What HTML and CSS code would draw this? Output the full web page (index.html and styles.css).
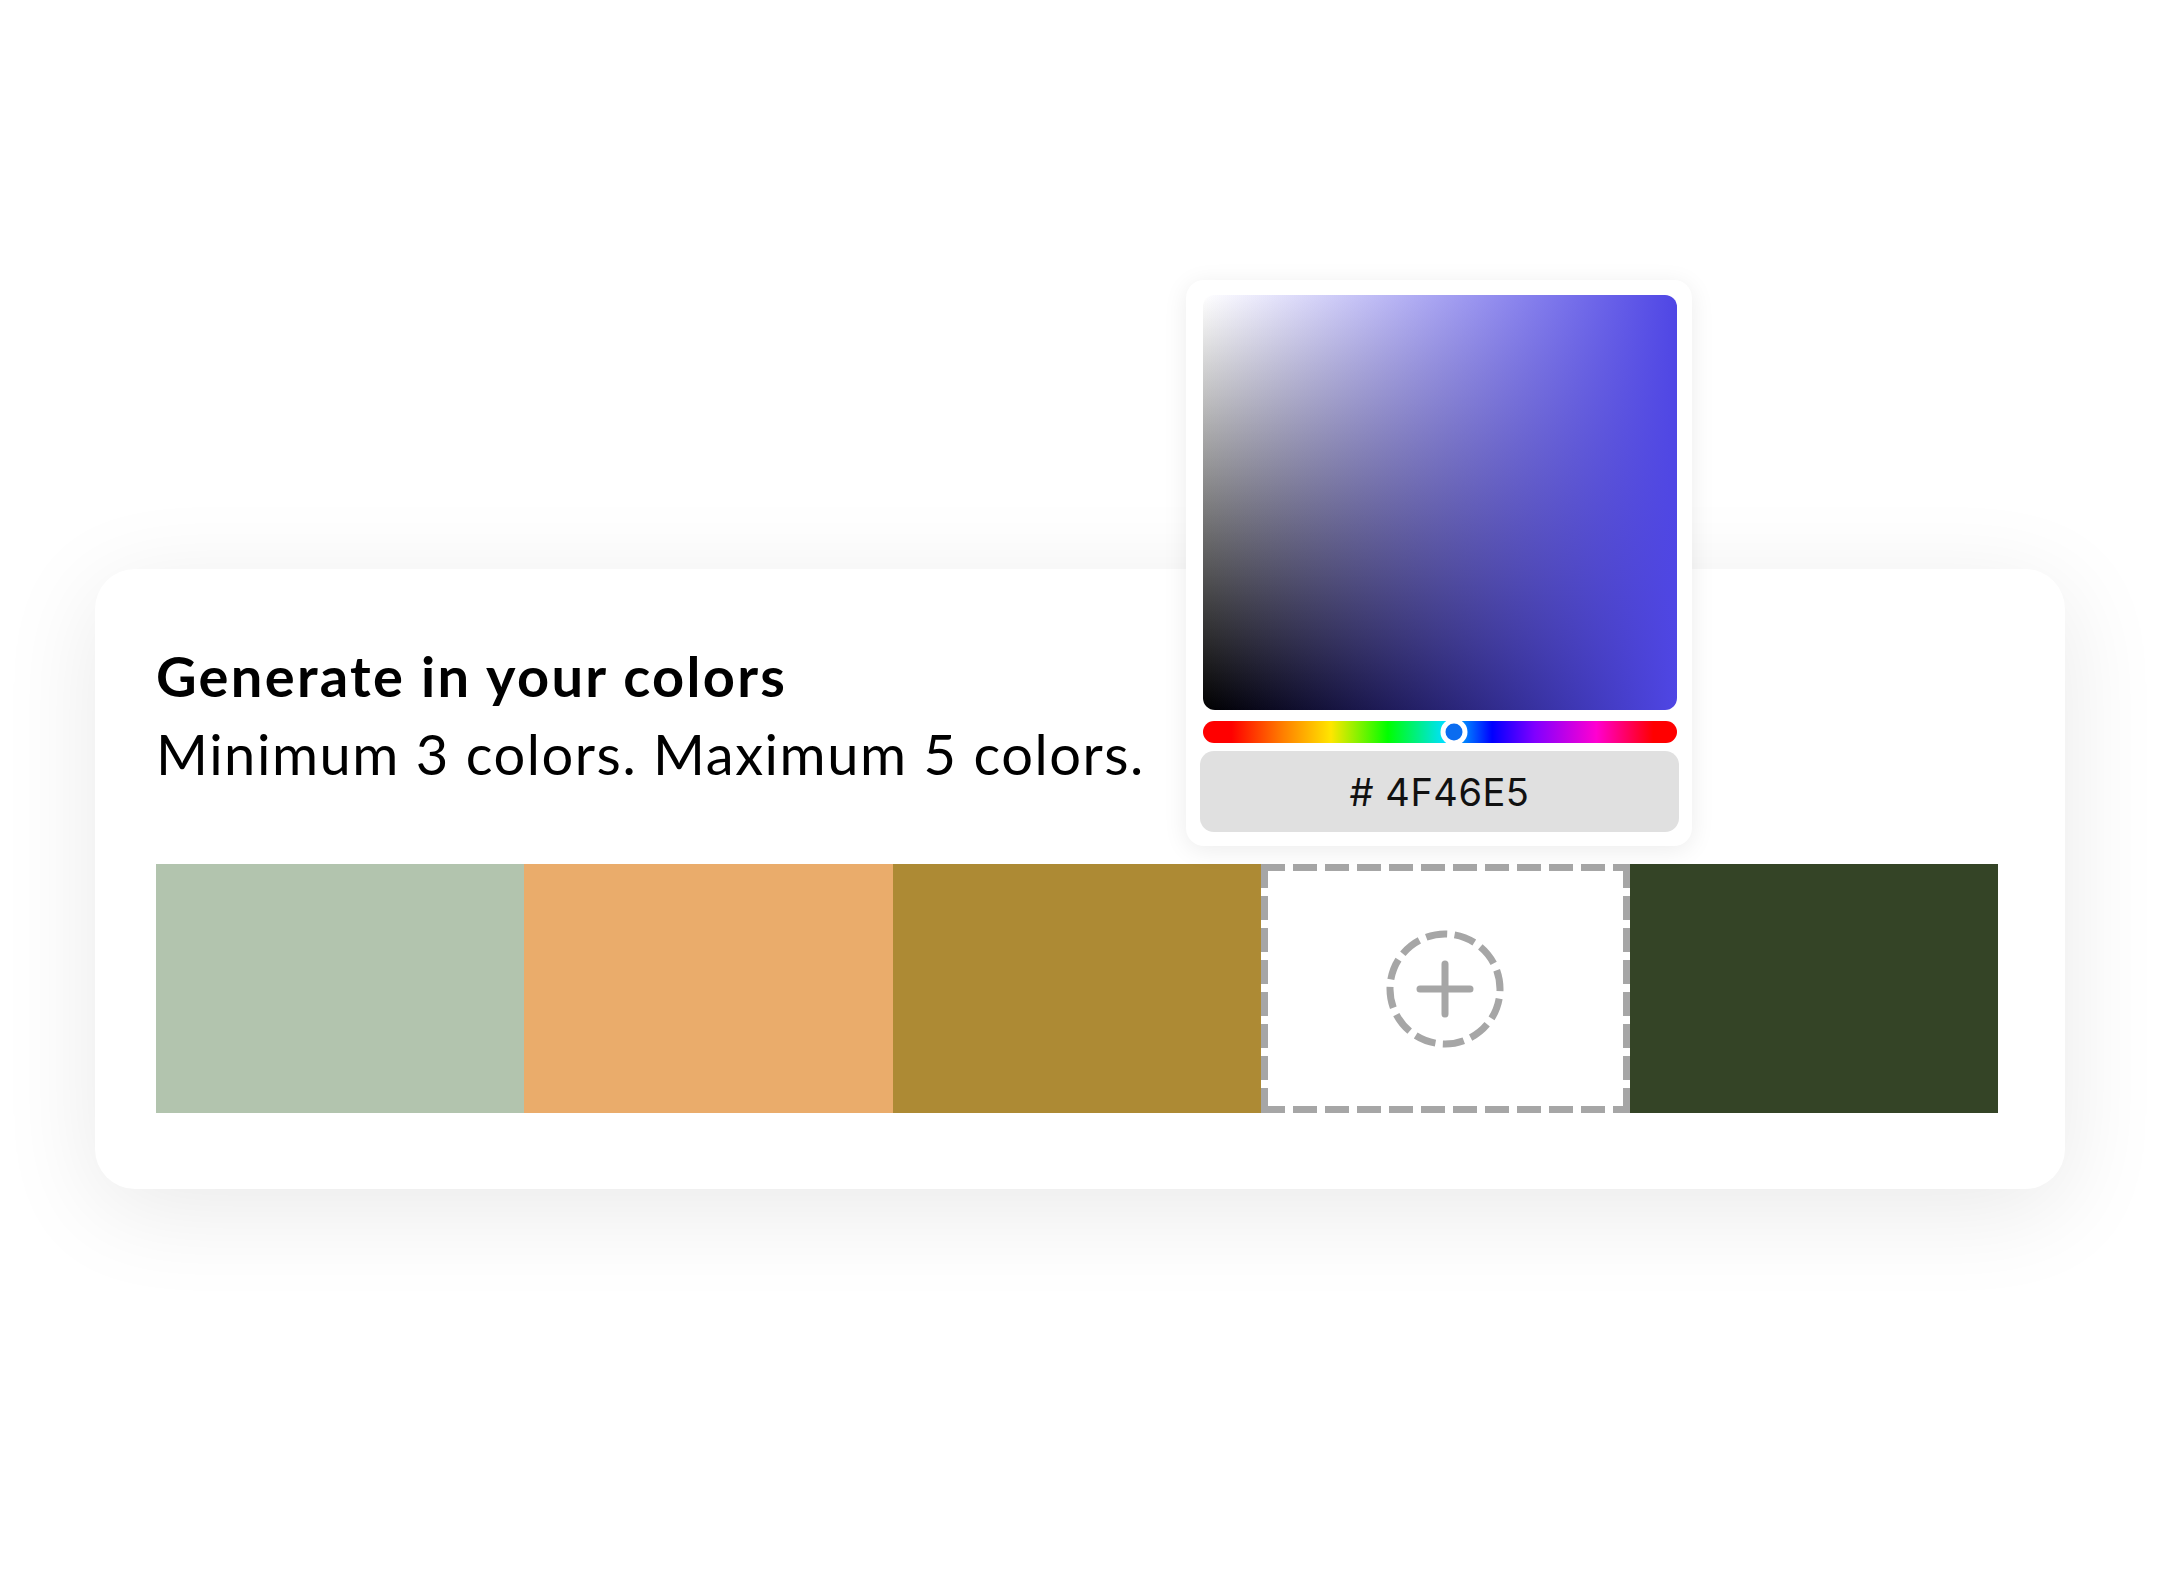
FILE: index.html
```html
<!DOCTYPE html>
<html lang="en">
<head>
    <meta charset="UTF-8">
    <meta name="viewport" content="width=device-width, initial-scale=1.0">
    <title>Generate in your colors</title>
    <link rel="stylesheet" href="styles.css">
</head>
<body>
    <div class="stage">
        <section class="card">
            <div class="intro">
                <h2 class="title">Generate in your colors</h2>
                <p class="subtitle">Minimum 3 colors. Maximum 5 colors.</p>
            </div>

            <div class="palette">
                <div class="swatch swatch-sage"></div>
                <div class="swatch swatch-peach"></div>
                <div class="swatch swatch-mustard"></div>
                <button class="swatch swatch-add" type="button" aria-label="Add color">
                    <svg width="122" height="122" viewBox="0 0 122 122" fill="none" stroke="#a6a6a6" stroke-width="7" stroke-linecap="round">
                        <circle cx="61" cy="61" r="55" pathLength="12" stroke-dasharray="0.74 0.26" stroke-linecap="butt" transform="rotate(-80 61 61)"/>
                        <path d="M61 36v50M36 61h50"/>
                    </svg>
                </button>
                <div class="swatch swatch-moss"></div>
            </div>

            <!-- color picker popover -->
            <div class="picker">
                <div class="picker-field"></div>
                <div class="picker-hue">
                    <span class="picker-thumb"></span>
                </div>
                <div class="picker-hex"># 4F46E5</div>
            </div>
        </section>
    </div>
</body>
</html>
```

FILE: styles.css
```css
body {
    margin: 0;
    background: #ffffff;
    font-family: "Lato", "Liberation Sans", sans-serif;
    color: #000000;
}

.stage {
    padding: 569px 95px 300px 95px;
}

.card {
    position: relative;
    background: #ffffff;
    border-radius: 40px;
    padding: 68px 67px 76px 61px;
    box-shadow: 0 20px 100px rgba(0, 0, 0, 0.09);
}

.intro {
    margin-bottom: 71px;
}

.title {
    margin: 0;
    font-size: 56px;
    line-height: 78px;
    font-weight: 700;
    letter-spacing: 2.3px;
}

.subtitle {
    margin: 0;
    font-size: 56px;
    line-height: 78px;
    font-weight: 400;
    letter-spacing: 1.55px;
}

.palette {
    display: grid;
    grid-template-columns: repeat(5, 1fr);
    height: 249px;
}

.swatch {
    height: 100%;
}

.swatch-sage {
    background: #b2c4ae;
}

.swatch-peach {
    background: #eaac6b;
}

.swatch-mustard {
    background: #ad8a34;
}

.swatch-moss {
    background: #344426;
}

/* dashed frame drawn with gradients: 24px dash, 8px gap */
.swatch-add {
    display: flex;
    align-items: center;
    justify-content: center;
    margin: 0;
    padding: 0;
    border: none;
    cursor: pointer;
    background:
        repeating-linear-gradient(90deg, #a6a6a6 0 24px, transparent 24px 32px) top left / 100% 7px no-repeat,
        repeating-linear-gradient(90deg, #a6a6a6 0 24px, transparent 24px 32px) bottom left / 100% 7px no-repeat,
        repeating-linear-gradient(180deg, #a6a6a6 0 24px, transparent 24px 32px) top left / 7px 100% no-repeat,
        repeating-linear-gradient(180deg, #a6a6a6 0 24px, transparent 24px 32px) top right / 7px 100% no-repeat,
        #ffffff;
}

.picker {
    position: absolute;
    left: 1091px;
    top: -289px;
    width: 506px;
    box-sizing: border-box;
    padding: 15px 13px 14px 14px;
    background: #ffffff;
    border-radius: 18px;
    box-shadow: 0 4px 24px rgba(0, 0, 0, 0.08);
}

.picker-field {
    height: 415px;
    margin: 0 2px 0 3px;
    border-radius: 12px;
    background:
        linear-gradient(to right, rgba(79, 70, 229, 0), #4f46e5),
        linear-gradient(to bottom, #ffffff, #000000);
}

.picker-hue {
    position: relative;
    height: 22px;
    margin: 11px 2px 8px 3px;
    border-radius: 11px;
    background: linear-gradient(to right, #ff0000 6%, #ff8000 17%, #ffe600 27%, #00ff00 39%, #00e0ff 51%, #0000ff 61%, #8000ff 70%, #ff00d0 83%, #ff0000 95%);
}

.picker-thumb {
    position: absolute;
    left: 53%;
    top: 50%;
    width: 27px;
    height: 27px;
    box-sizing: border-box;
    border: 5px solid #ffffff;
    border-radius: 50%;
    background: #0a6cf0;
    transform: translate(-50%, -50%);
}

.picker-hex {
    height: 81px;
    border-radius: 14px;
    background: #e0e0e0;
    display: flex;
    align-items: center;
    justify-content: center;
    font-family: "Inter", "Liberation Sans", sans-serif;
    font-size: 38px;
    letter-spacing: 0.5px;
    color: #111111;
}
```
